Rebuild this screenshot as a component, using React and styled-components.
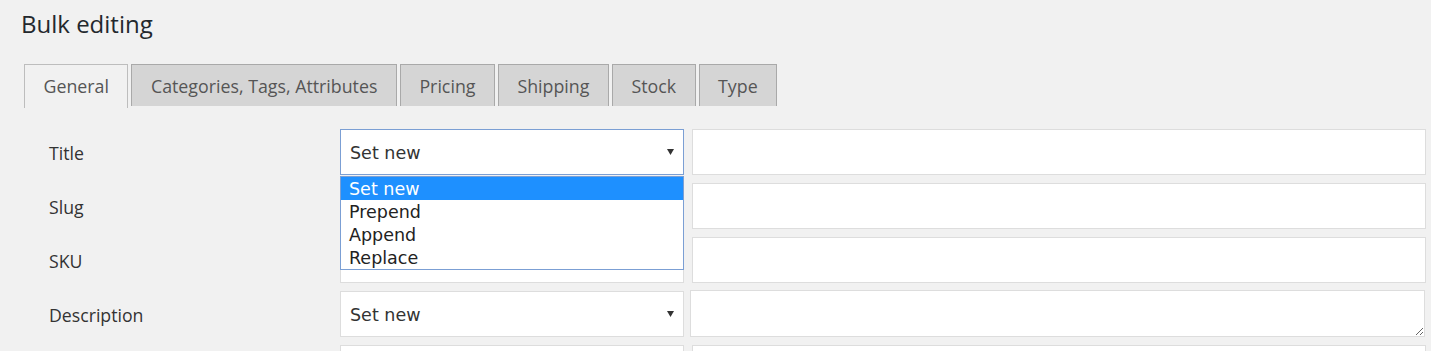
import styled, { createGlobalStyle } from 'styled-components'

const GlobalStyle = createGlobalStyle`
  html, body {
    margin: 0;
    padding: 0;
    overflow: hidden;
    background-color: #f1f1f1;
    font-family: "Open Sans", "Liberation Sans", sans-serif;
  }
`

const Page = styled.div`
  padding: 7px 5px 0 0;
`

const Heading = styled.h1`
  margin: 0 0 24px 21px;
  font-size: 24px;
  line-height: 33px;
  font-weight: 400;
  color: #23282d;
`

const TabBar = styled.div`
  display: flex;
  align-items: flex-start;
  gap: 3px;
  padding-left: 24px;
`

const Tab = styled.div`
  box-sizing: border-box;
  height: ${(p) => (p.$active ? '44px' : '42px')};
  padding: 0 18.5px;
  display: flex;
  align-items: center;
  padding-bottom: ${(p) => (p.$active ? '2px' : '0')};
  border: 1px solid ${(p) => (p.$active ? '#bdbdbd' : '#a9a9a9')};
  border-bottom: none;
  background-color: ${(p) => (p.$active ? '#f1f1f1' : '#d5d5d5')};
  color: #555;
  font-size: 17.8px;
  white-space: nowrap;
`

const Form = styled.div`
  margin-top: 21px;
  padding-left: 24px;
  display: flex;
  flex-direction: column;
  gap: 8px;
`

const Row = styled.div`
  display: grid;
  grid-template-columns: 308px 344px 1fr;
  column-gap: 8px;
  align-items: center;
`

const Label = styled.div`
  padding-left: 25px;
  padding-top: 2px;
  font-size: 17.7px;
  color: #333;
`

const SelectWrap = styled.div`
  position: relative;
`

const SelectBox = styled.div`
  box-sizing: border-box;
  height: 46px;
  display: flex;
  align-items: center;
  justify-content: space-between;
  padding: 1px 9px 0;
  background-color: #fff;
  border: 1px solid ${(p) => (p.$focused ? '#7b9fd4' : '#dddddd')};
  font-family: "DejaVu Sans", Verdana, sans-serif;
  font-size: 17.5px;
  color: #333;
`

const Arrow = styled.svg`
  width: 7px;
  height: 6px;
  margin-top: -1px;
`

const Dropdown = styled.ul`
  position: absolute;
  top: calc(100% + 1px);
  left: 0;
  right: 0;
  margin: 0;
  padding: 0;
  list-style: none;
  background-color: #fff;
  border: 1px solid #7b9fd4;
  z-index: 2;
`

const Option = styled.li`
  height: 23px;
  line-height: 24px;
  padding-left: 8px;
  font-family: "DejaVu Sans", Verdana, sans-serif;
  font-size: 17.5px;
  color: ${(p) => (p.$selected ? '#fff' : '#222')};
  background-color: ${(p) => (p.$selected ? '#1e90ff' : 'transparent')};
`

const TextInput = styled.div`
  box-sizing: border-box;
  height: 46px;
  background-color: #fff;
  border: 1px solid #dddddd;
`

const TextArea = styled.textarea`
  box-sizing: border-box;
  display: block;
  width: calc(100% + 1px);
  height: 47px;
  margin-left: -2px;
  margin-top: -2px;
  background-color: #fff;
  border: 1px solid #dddddd;
  outline: none;
  font-family: inherit;
`

const tabs = ['General', 'Categories, Tags, Attributes', 'Pricing', 'Shipping', 'Stock', 'Type']
const options = ['Set new', 'Prepend', 'Append', 'Replace']

const fields = [
  { label: 'Title', open: true },
  { label: 'Slug' },
  { label: 'SKU' },
  { label: 'Description', textarea: true },
  { label: 'Short description' },
]

function SelectField({ open }) {
  return (
    <SelectWrap>
      <SelectBox $focused={open}>
        <span>Set new</span>
        <Arrow viewBox="0 0 7 6">
          <path d="M0 0 H7 L3.5 6 Z" fill="#333" />
        </Arrow>
      </SelectBox>
      {open && (
        <Dropdown>
          {options.map((o, i) => (
            <Option key={o} $selected={i === 0}>{o}</Option>
          ))}
        </Dropdown>
      )}
    </SelectWrap>
  )
}

export default function App() {
  return (
    <>
      <GlobalStyle />
      <Page>
        <Heading>Bulk editing</Heading>
        <TabBar>
          {tabs.map((t, i) => (
            <Tab key={t} $active={i === 0}>{t}</Tab>
          ))}
        </TabBar>
        <Form>
          {fields.map((f) => (
            <Row key={f.label}>
              <Label>{f.label}</Label>
              <SelectField open={f.open} />
              {f.textarea ? <TextArea readOnly /> : <TextInput />}
            </Row>
          ))}
        </Form>
      </Page>
    </>
  )
}
